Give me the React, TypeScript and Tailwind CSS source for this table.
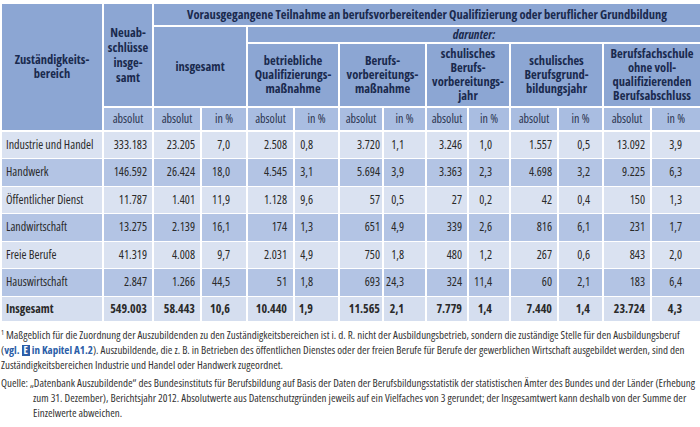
import React from 'react';

const rows = [
  ['Industrie und Handel', '333.183', '23.205', '7,0', '2.508', '0,8', '3.720', '1,1', '3.246', '1,0', '1.557', '0,5', '13.092', '3,9'],
  ['Handwerk', '146.592', '26.424', '18,0', '4.545', '3,1', '5.694', '3,9', '3.363', '2,3', '4.698', '3,2', '9.225', '6,3'],
  ['Öffentlicher Dienst', '11.787', '1.401', '11,9', '1.128', '9,6', '57', '0,5', '27', '0,2', '42', '0,4', '150', '1,3'],
  ['Landwirtschaft', '13.275', '2.139', '16,1', '174', '1,3', '651', '4,9', '339', '2,6', '816', '6,1', '231', '1,7'],
  ['Freie Berufe', '41.319', '4.008', '9,7', '2.031', '4,9', '750', '1,8', '480', '1,2', '267', '0,6', '843', '2,0'],
  ['Hauswirtschaft', '2.847', '1.266', '44,5', '51', '1,8', '693', '24,3', '324', '11,4', '60', '2,1', '183', '6,4'],
];
const total = ['Insgesamt', '549.003', '58.443', '10,6', '10.440', '1,9', '11.565', '2,1', '7.779', '1,4', '7.440', '1,4', '23.724', '4,3'];

// right padding per column, read off the reference
const pads = [
  '',
  'pr-[5px]',
  'pr-[5px]',
  'pr-[16px]',
  'pr-[6px]',
  'pr-[25px]',
  'pr-[2px]',
  'pr-[21px]',
  'pr-[5px]',
  'pr-[17px]',
  'pr-[5px]',
  'pr-[12px]',
  'pr-[5px]',
  'pr-[18px]',
];

const groups = [
  ['betriebliche', 'Qualifizierungs-', 'maßnahme'],
  ['Berufs-', 'vorbereitungs-', 'maßnahme'],
  ['schulisches', 'Berufs-', 'vorbereitungs-', 'jahr'],
  ['schulisches', 'Berufsgrund-', 'bildungsjahr'],
  ['Berufsfachschule', 'ohne voll-', 'qualifizierenden', 'Berufsabschluss'],
];

function Lines({ lines }: { lines: string[] }) {
  return (
    <>
      {lines.map((l, i) => (
        <span key={i} className="block">
          {l}
        </span>
      ))}
    </>
  );
}

export default function App() {
  const th = 'border-2 border-white bg-[#8ca6d3] text-[#1a2a4e] font-bold text-[12.5px] leading-[14px] text-center align-middle p-0';
  const sub = 'border-2 border-white bg-[#a9bde1] text-[#2b3550] font-normal text-[12px] text-center align-middle p-0';
  const td = 'border-x-2 border-y border-white text-[12px] text-[#2a2a2a] align-middle p-0';

  return (
    <div className="w-[700px] h-[427px] bg-white overflow-hidden pt-[2px] font-['Open_Sans',sans-serif] font-stretch-condensed">
      <table className="w-[700px] table-fixed border-collapse">
        <colgroup>
          <col className="w-[102px]" />
          <col className="w-[50px]" />
          <col className="w-[48px]" />
          <col className="w-[46px]" />
          <col className="w-[47px]" />
          <col className="w-[45px]" />
          <col className="w-[44px]" />
          <col className="w-[43px]" />
          <col className="w-[42px]" />
          <col className="w-[42px]" />
          <col className="w-[48px]" />
          <col className="w-[45px]" />
          <col className="w-[48px]" />
          <col className="w-[50px]" />
        </colgroup>
        <thead>
          <tr className="h-[23px]">
            <th rowSpan={4} className={th}>
              <Lines lines={['Zuständigkeits-', 'bereich']} />
            </th>
            <th rowSpan={3} className={th + ' leading-[15px]'}>
              <Lines lines={['Neuab-', 'schlüsse', 'insge-', 'samt']} />
            </th>
            <th colSpan={12} className={th}>
              Vorausgegangene Teilnahme an berufsvorbereitender Qualifizierung oder beruflicher Grundbildung
            </th>
          </tr>
          <tr className="h-[17px]">
            <th colSpan={2} rowSpan={2} className={th}>
              insgesamt
            </th>
            <th colSpan={10} className={th + ' italic'}>
              darunter:
            </th>
          </tr>
          <tr className="h-[64px]">
            {groups.map((g, i) => (
              <th key={i} colSpan={2} className={th}>
                <Lines lines={g} />
              </th>
            ))}
          </tr>
          <tr className="h-[24px]">
            <th className={sub}>absolut</th>
            {[0, 1, 2, 3, 4, 5].map((i) => (
              <React.Fragment key={i}>
                <th className={sub}>absolut</th>
                <th className={sub}>in %</th>
              </React.Fragment>
            ))}
          </tr>
        </thead>
        <tbody>
          {rows.map((r, ri) => (
            <tr key={ri} className={'h-[27.5px] ' + (ri % 2 === 0 ? 'bg-[#dae2f1]' : 'bg-[#b3c4e4]')}>
              {r.map((c, ci) => (
                <td key={ci} className={td + (ci === 0 ? ' text-left pl-[4px] whitespace-nowrap' : ' text-right ' + pads[ci])}>
                  {c}
                </td>
              ))}
            </tr>
          ))}
          <tr className="h-[25px] bg-[#d5deef]">
            {total.map((c, ci) => (
              <td
                key={ci}
                className={td + ' font-bold text-[#1f1f1f]' + (ci === 0 ? ' text-left pl-[4px]' : ' text-right ' + pads[ci])}
              >
                {c}
              </td>
            ))}
          </tr>
        </tbody>
      </table>

      <div className="mt-[5px] text-[11px] leading-[15px] text-[#333] pl-[1px]">
        <p>
          <sup className="text-[7px]">1</sup> Maßgeblich für die Zuordnung der Auszubildenden zu den Zuständigkeitsbereichen ist i. d. R. nicht der
          Ausbildungsbetrieb, sondern die zuständige Stelle für den Ausbildungsberuf (
          <span className="font-bold text-[#2c5ea8]">
            vgl. <span className="inline-block bg-[#2c5ea8] text-white px-[2px] leading-[11px] text-[10px]">E</span> in Kapitel A1.2
          </span>
          ). Auszubildende, die z. B. in Betrieben des öffentlichen Dienstes oder der freien Berufe für Berufe der gewerblichen
          Wirtschaft ausgebildet werden, sind den Zuständigkeitsbereichen Industrie und Handel oder Handwerk zugeordnet.
        </p>
        <p className="mt-[3px] pl-[32px] -indent-[32px]">
          Quelle: „Datenbank Auszubildende“ des Bundesinstituts für Berufsbildung auf Basis der Daten der
          Berufsbildungsstatistik der statistischen Ämter des Bundes und der Länder (Erhebung zum 31. Dezember), Berichtsjahr
          2012. Absolutwerte aus Datenschutzgründen jeweils auf ein Vielfaches von 3 gerundet; der Insgesamtwert kann deshalb
          von der Summe der Einzelwerte abweichen.
        </p>
      </div>
    </div>
  );
}
